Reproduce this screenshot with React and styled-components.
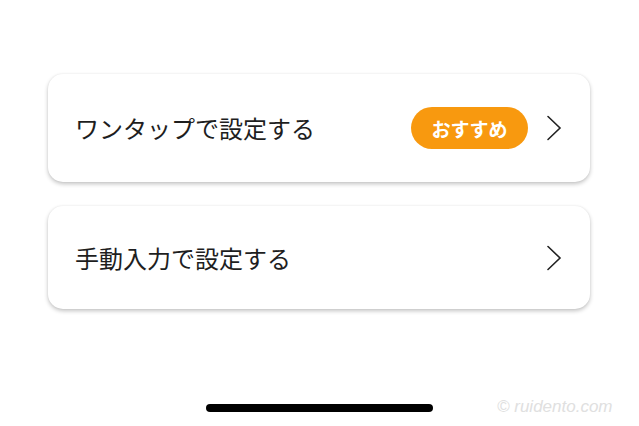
import React from "react";
import styled, { createGlobalStyle } from "styled-components";

const Global = createGlobalStyle`
  html, body {
    margin: 0;
    padding: 0;
    background: #ffffff;
    font-family: "Noto Sans CJK JP", "Noto Sans", sans-serif;
  }
`;

const Screen = styled.div`
  width: 639px;
  height: 426px;
  display: flex;
  flex-direction: column;
  box-sizing: border-box;
  padding: 74px 49px 0 48px;
  position: relative;
  overflow: hidden;
`;

const List = styled.div`
  display: flex;
  flex-direction: column;
  gap: 24px;
`;

const Card = styled.div`
  height: ${(p) => p.$h}px;
  display: flex;
  align-items: center;
  padding: 0 28px 0 27px;
  background: #ffffff;
  border-radius: 15px;
  box-shadow: 0 2px 4px rgba(0, 0, 0, 0.24), 0 0 2px rgba(0, 0, 0, 0.06);
`;

const Label = styled.span`
  flex: 1;
  font-size: 24px;
  color: #1e1e1e;
  margin-top: -1px;
`;

const Badge = styled.span`
  height: 42px;
  width: 117px;
  display: flex;
  align-items: center;
  justify-content: center;
  border-radius: 21px;
  background: #f8990f;
  color: #ffffff;
  font-size: 19px;
  font-weight: 700;
  margin-right: 18px;
`;

const Chevron = () => (
  <svg width="16" height="26" viewBox="0 0 16 26" fill="none">
    <path d="M2 1.5 L14 13 L2 24.5" stroke="#222" strokeWidth="1.6" strokeLinecap="round" strokeLinejoin="miter" />
  </svg>
);

const HomeBar = styled.div`
  position: absolute;
  left: 206px;
  top: 404px;
  width: 227px;
  height: 8px;
  border-radius: 4px;
  background: #000;
`;

const Watermark = styled.span`
  position: absolute;
  left: 497px;
  top: 397px;
  font-family: "Liberation Sans", sans-serif;
  font-style: italic;
  font-size: 17px;
  color: #e0e0e0;
`;

export default function App() {
  return (
    <>
      <Global />
      <Screen>
        <List>
          <Card $h={108}>
            <Label>ワンタップで設定する</Label>
            <Badge>おすすめ</Badge>
            <Chevron />
          </Card>
          <Card $h={103}>
            <Label>手動入力で設定する</Label>
            <Chevron />
          </Card>
        </List>
        <HomeBar />
        <Watermark>© ruidento.com</Watermark>
      </Screen>
    </>
  );
}
